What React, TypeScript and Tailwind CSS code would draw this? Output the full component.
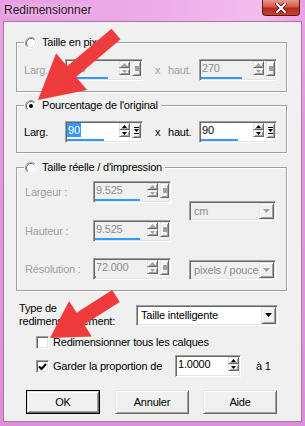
const raised =
  'border border-t-[#e3e3e3] border-l-[#e3e3e3] border-r-[#696969] border-b-[#696969] shadow-[inset_1px_1px_0_#fff,inset_-1px_-1px_0_#a0a0a0] bg-[#f0f0f0]'
const sunken =
  'border border-t-[#a0a0a0] border-l-[#a0a0a0] border-r-white border-b-white shadow-[inset_1px_1px_0_#696969,inset_-1px_-1px_0_#e3e3e3]'
const etched = 'border border-[#a0a0a0] shadow-[inset_1px_1px_0_#fff,1px_1px_0_#fff]'

const Radio = ({ checked = false }: { checked?: boolean }) => (
  <svg width="12" height="12" viewBox="0 0 12 12" className="shrink-0">
    <circle cx="6" cy="6" r="5" fill="#fff" />
    <path d="M2.1 9.9 A5.5 5.5 0 0 1 9.9 2.1" stroke="#a0a0a0" fill="none" />
    <path d="M9.9 2.1 A5.5 5.5 0 0 1 2.1 9.9" stroke="#fff" fill="none" />
    <path d="M2.8 9.2 A4.5 4.5 0 0 1 9.2 2.8" stroke="#696969" fill="none" />
    <path d="M9.2 2.8 A4.5 4.5 0 0 1 2.8 9.2" stroke="#e3e3e3" fill="none" />
    {checked && <circle cx="6" cy="6" r="2" fill="#000" />}
  </svg>
)

const Check = ({ checked = false }: { checked?: boolean }) => (
  <div className={`w-[13px] h-[13px] shrink-0 bg-white ${sunken} flex items-center justify-center`}>
    {checked && (
      <svg width="9" height="9" viewBox="0 0 9 9">
        <path d="M1 4.5 L3.5 7 L8 2" stroke="#000" strokeWidth="2" fill="none" />
      </svg>
    )}
  </div>
)

const Tri = ({ up = false, disabled = false }: { up?: boolean; disabled?: boolean }) => (
  <svg width="5" height="3" viewBox="0 0 5 3">
    <polygon points={up ? '0,3 5,3 2.5,0' : '0,0 5,0 2.5,3'} fill={disabled ? '#a0a0a0' : '#000'} />
  </svg>
)

type SpinProps = {
  value: string
  disabled?: boolean
  bar?: string
  selected?: boolean
  extra?: boolean
  w?: string
}

const SpinInput = ({ value, disabled = false, bar = 'w-0', selected = false, extra = true, w = 'w-[78px]' }: SpinProps) => (
  <div className={`${w} h-[22px] p-px flex shrink-0 ${sunken} ${disabled ? 'bg-[#f0f0f0]' : 'bg-white'}`}>
    <div className="flex-1 min-w-0 flex flex-col justify-between">
      <span
        className={`self-start leading-[14px] px-px ${
          selected ? 'bg-[#3399ff] text-white' : disabled ? 'text-[#8d8d8d]' : 'text-black'
        }`}
      >
        {value}
      </span>
      <div className={`h-[2px] bg-[#3399ff] ${bar}`} />
    </div>
    <div className="w-[11px] flex flex-col pb-[3px]">
      <div className={`h-[7px] ${raised} flex items-center justify-center`}>
        <Tri up disabled={disabled} />
      </div>
      <div className={`h-[7px] ${raised} flex items-center justify-center`}>
        <Tri disabled={disabled} />
      </div>
    </div>
    {extra && (
      <div className="ml-[2px] w-[9px] flex flex-col pb-[3px]">
        <div className={`flex-1 ${raised} flex items-center justify-center`}>
          {disabled ? (
            <div className="w-[4px] h-[5px] bg-[#a0a0a0]" />
          ) : (
            <svg width="5" height="7" viewBox="0 0 5 7">
              <rect x="0" y="0" width="5" height="1" fill="#000" />
              <polygon points="0,2 5,2 2.5,5" fill="#000" />
              <rect x="0" y="6" width="5" height="1" fill="#000" />
            </svg>
          )}
        </div>
      </div>
    )}
  </div>
)

const Select = ({ value, disabled = false, w, h = 'h-[20px]' }: { value: string; disabled?: boolean; w: string; h?: string }) => (
  <div className={`${w} ${h} p-px flex ${sunken} ${disabled ? 'bg-[#f0f0f0]' : 'bg-white'}`}>
    <span
      className={`flex-1 min-w-0 overflow-hidden whitespace-nowrap pl-[3px] self-center leading-[14px] ${
        disabled ? 'text-[#8d8d8d]' : 'text-black'
      }`}
    >
      {value}
    </span>
    <div className={`w-[15px] ${raised} flex items-center justify-center`}>
      <svg width="7" height="4" viewBox="0 0 7 4">
        <polygon points="0,0 7,0 3.5,4" fill={disabled ? '#a0a0a0' : '#000'} />
      </svg>
    </div>
  </div>
)

const Group = ({ title, checked, className, children }: { title: string; checked?: boolean; className: string; children: React.ReactNode }) => (
  <div className={`relative ml-[12px] w-[271px] ${etched} ${className}`}>
    <div className="absolute left-[7px] top-[-7px] h-[13px] flex items-center gap-[5px] pl-px pr-[3px] bg-[#f0f0f0] leading-[13px]">
      <Radio checked={checked} />
      <span>{title}</span>
    </div>
    {children}
  </div>
)

const Button = ({ label, def = false, className = '' }: { label: string; def?: boolean; className?: string }) => (
  <div className={`w-[74px] h-[24px] ${def ? 'border border-black' : ''} ${className}`}>
    <div className={`w-full h-full ${raised} flex items-center justify-center`}>{label}</div>
  </div>
)

export default function App() {
  return (
    <div className="relative w-[305px] h-[426px] flex flex-col bg-[linear-gradient(180deg,#eaa6e6_0%,#e399df_30%,#de8dda_100%)] font-['Liberation_Sans',Arial,sans-serif] text-[11px] tracking-[-0.2px] text-black overflow-hidden">
      {/* title bar */}
      <div className="h-[21px] flex items-start justify-between bg-[linear-gradient(90deg,#e69ce2_0%,#eeaeea_55%,#f2bcee_85%,#e8a2e4_100%)]">
        <span className="pl-[4px] pt-[3px] text-[12px] tracking-normal leading-[14px] text-[#2a1420] [text-shadow:0_0_6px_#fde8fb]">
          Redimensionner
        </span>
        <div className="mr-[5px] w-[38px] h-[16px] rounded-b-[4px] border border-t-0 border-[#5e1410] bg-[linear-gradient(180deg,#e8998e_0%,#d35a4b_45%,#b8291c_55%,#c9402f_100%)] flex items-center justify-center">
          <svg width="12" height="10" viewBox="0 0 12 10">
            <path d="M2 1 L10 9 M10 1 L2 9" stroke="#4a1410" strokeWidth="3.5" strokeLinecap="square" />
            <path d="M2 1 L10 9 M10 1 L2 9" stroke="#fff" strokeWidth="2" strokeLinecap="square" />
          </svg>
        </div>
      </div>

      {/* client area */}
      <div className="flex-1 mx-[3px] mb-[4px] border border-[#a8789f] bg-[#f0f0f0] flex flex-col">
        <Group title="Taille en pixels" className="mt-[20px] pt-[16px] pb-[10px] pl-[7px]">
          <div className="flex items-center h-[22px] text-[#a0a0a0]">
            <span className="w-[41px]">Larg.</span>
            <SpinInput value="300" disabled bar="w-[41px]" />
            <span className="ml-[12px] w-[13px]">x</span>
            <span className="w-[31px]">haut.</span>
            <SpinInput value="270" disabled bar="w-[41px]" />
          </div>
        </Group>

        <Group title="Pourcentage de l'original" checked className="mt-[13px] pt-[15px] pb-[9px] pl-[7px]">
          <div className="flex items-center h-[22px]">
            <span className="w-[41px]">Larg.</span>
            <SpinInput value="90" selected bar="w-[37px]" />
            <span className="ml-[12px] w-[13px]">x</span>
            <span className="w-[31px]">haut.</span>
            <SpinInput value="90" bar="w-[37px]" />
          </div>
        </Group>

        <Group title="Taille réelle / d'impression" className="mt-[14px] pt-[13px] pb-[10px] pl-[8px]">
          <div className="flex">
            <div className="flex flex-col text-[#a0a0a0]">
              <div className="flex items-center h-[22px]">
                <span className="w-[68px]">Largeur :</span>
                <SpinInput value="9.525" disabled bar="w-[45px]" />
              </div>
              <div className="flex items-center h-[22px] mt-[17px]">
                <span className="w-[68px]">Hauteur :</span>
                <SpinInput value="9.525" disabled bar="w-[45px]" />
              </div>
              <div className="flex items-center h-[22px] mt-[16px]">
                <span className="w-[68px]">Résolution :</span>
                <SpinInput value="72.000" disabled bar="w-px" />
              </div>
            </div>
            <div className="ml-[18px] flex flex-col">
              <div className="mt-[20px]">
                <Select value="cm" disabled w="w-[87px]" />
              </div>
              <div className="mt-[39px]">
                <Select value="pixels / pouce" disabled w="w-[87px]" />
              </div>
            </div>
          </div>
        </Group>

        <div className="mt-[11px] ml-[15px] flex items-center">
          <span className="w-[117px] leading-[13px]">
            Type de
            <br />
            redimensionnement:
          </span>
          <Select value="Taille intelligente" w="w-[142px]" h="h-[21px]" />
        </div>

        <div className="mt-[7px] ml-[32px] h-[14px] flex items-center">
          <Check />
          <span className="ml-[4px]">Redimensionner tous les calques</span>
        </div>

        <div className="mt-[6px] ml-[32px] h-[22px] flex items-center">
          <Check checked />
          <span className="ml-[4px] w-[122px]">Garder la proportion de</span>
          <SpinInput value="1.0000" extra={false} w="w-[66px]" />
          <span className="ml-[15px]">à 1</span>
        </div>

        <div className="mt-[13px] ml-[22px] flex">
          <Button label="OK" def />
          <Button label="Annuler" className="ml-[15px]" />
          <Button label="Aide" className="ml-[14px]" />
        </div>
      </div>

      {/* red annotation arrows */}
      <svg className="absolute inset-0 pointer-events-none" width="305" height="426" viewBox="0 0 305 426">
        <polygon
          points="111.5,28.7 120.5,39.3 76.1,76.9 87.1,89.9 38,100 56.1,53.3 67.1,66.3"
          fill="#ef3b3b"
        />
        <polygon
          points="112.2,290.1 119.8,301.9 84.2,324.6 91.7,336.4 50,338 69.1,301 76.6,312.8"
          fill="#ef3b3b"
        />
      </svg>
    </div>
  )
}
